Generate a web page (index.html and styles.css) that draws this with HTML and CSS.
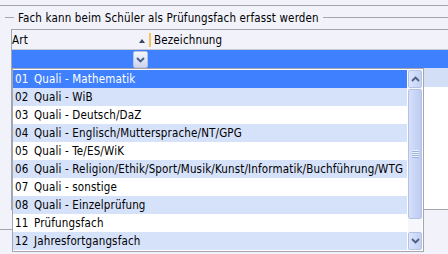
FILE: index.html
```html
<!DOCTYPE html>
<html lang="de">
<head>
<meta charset="utf-8">
<title>Prüfungsfach</title>
<link rel="stylesheet" href="styles.css">
</head>
<body>
<div class="top-rule"></div>
<div class="group-title">
  <span class="rule rule-short"></span>
  <span class="group-label">Fach kann beim Schüler als Prüfungsfach erfasst werden</span>
  <span class="rule rule-long"></span>
</div>
<div class="grid">
  <div class="grid-head">
    <div class="col-art">
      <span>Art</span>
      <span class="sort-up"></span>
    </div>
    <span class="col-sep"></span>
    <div class="col-bez">Bezeichnung</div>
  </div>
  <div class="grid-edit">
    <div class="edit-art">
      <span class="combo-btn">
        <svg width="9" height="6" viewBox="0 0 9 6"><path d="M1 1 L4.5 4.5 L8 1" fill="none" stroke="#4a5d85" stroke-width="1.8"/></svg>
      </span>
    </div>
  </div>
  <div class="grid-body">
    <div class="body-row alt"></div>
  </div>
</div>
<div class="footer-strip"><span class="footer-line"></span></div>

<div class="dropdown">
  <div class="dd-rows">
    <div class="dd-row sel"><span class="code">01</span><span>Quali - Mathematik</span></div>
    <div class="dd-row alt"><span class="code">02</span><span>Quali - WiB</span></div>
    <div class="dd-row"><span class="code">03</span><span>Quali - Deutsch/DaZ</span></div>
    <div class="dd-row alt"><span class="code">04</span><span>Quali - Englisch/Muttersprache/NT/GPG</span></div>
    <div class="dd-row"><span class="code">05</span><span>Quali - Te/ES/WiK</span></div>
    <div class="dd-row alt"><span class="code">06</span><span>Quali - Religion/Ethik/Sport/Musik/Kunst/Informatik/Buchführung/WTG</span></div>
    <div class="dd-row"><span class="code">07</span><span>Quali - sonstige</span></div>
    <div class="dd-row alt"><span class="code">08</span><span>Quali - Einzelprüfung</span></div>
    <div class="dd-row"><span class="code">11</span><span>Prüfungsfach</span></div>
    <div class="dd-row alt"><span class="code">12</span><span>Jahresfortgangsfach</span></div>
  </div>
  <div class="scrollbar">
    <div class="sb-btn">
      <svg width="9" height="6" viewBox="0 0 9 6"><path d="M1 5 L4.5 1.5 L8 5" fill="none" stroke="#4a5d85" stroke-width="1.8"/></svg>
    </div>
    <div class="sb-thumb">
      <span class="grip"></span>
    </div>
    <div class="sb-track"></div>
    <div class="sb-btn">
      <svg width="9" height="6" viewBox="0 0 9 6"><path d="M1 1 L4.5 4.5 L8 1" fill="none" stroke="#4a5d85" stroke-width="1.8"/></svg>
    </div>
  </div>
</div>
</body>
</html>
```

FILE: styles.css
```css
html, body {
  margin: 0;
  padding: 0;
}
body {
  width: 448px;
  height: 254px;
  overflow: hidden;
  position: relative;
  background: #f2f2fb;
  font-family: "DejaVu Sans Condensed", "DejaVu Sans", sans-serif;
  font-stretch: condensed;
  font-size: 11.5px;
  letter-spacing: 0.15px;
  color: #000;
}
.top-rule {
  height: 5px;
  border-bottom: 1px solid #a5a5ad;
}
.group-title {
  display: flex;
  align-items: center;
  height: 23px;
}
.rule {
  height: 0;
  border-top: 1px solid #a5a5ad;
}
.rule-short {
  width: 9px;
  margin-left: 5px;
  margin-right: 4px;
}
.rule-long {
  flex: 1;
  margin-left: 4px;
}
.group-label {
  white-space: nowrap;
}
.grid {
  margin-left: 11px;
  border-left: 1px solid #a5a5ad;
  border-top: 1px solid #a5a5ad;
  height: 179px;
  display: flex;
  flex-direction: column;
  border-bottom: 1px solid #a5a5ad;
}
.grid-head {
  display: flex;
  align-items: center;
  height: 19px;
  border-bottom: 1px solid #c8c8d4;
  background: #f2f2fb;
}
.col-art {
  width: 133px;
  display: flex;
  align-items: center;
  justify-content: space-between;
  padding-right: 4px;
}
.sort-up {
  width: 0;
  height: 0;
  border-left: 3.5px solid transparent;
  border-right: 3.5px solid transparent;
  border-bottom: 4px solid #3c4660;
  margin-top: 3px;
}
.col-sep {
  width: 2px;
  height: 14px;
  background: #f6c25e;
}
.col-bez {
  padding-left: 3px;
}
.grid-edit {
  height: 18px;
  background: #3f80ff;
  display: flex;
}
.edit-art {
  width: 136px;
  display: flex;
  justify-content: flex-end;
  align-items: flex-end;
}
.combo-btn {
  width: 13px;
  height: 15px;
  border: 1px solid #b9c3df;
  border-radius: 2px;
  background: linear-gradient(#f4f6fc, #cdd5ec);
  display: flex;
  align-items: center;
  justify-content: center;
}
.grid-body {
  flex: 1;
  background: #fff;
}
.body-row {
  height: 19px;
}
.body-row.alt {
  background: #d3dff7;
}
.footer-strip {
  height: 20px;
}
.footer-line {
  display: block;
  width: 12px;
  height: 19px;
  border-bottom: 1px solid #a5a5ad;
}
.dropdown {
  position: absolute;
  left: 12px;
  top: 68px;
  width: 409px;
  height: 180px;
  border: 1px solid #a5a5ad;
  background: #fff;
  display: flex;
  padding: 1px 1px 1px 0;
}
.dd-rows {
  width: 394px;
  display: flex;
  flex-direction: column;
}
.dd-row {
  height: 18px;
  display: flex;
  align-items: center;
  white-space: nowrap;
  color: #000;
}
.dd-row.alt {
  background: #d6e2fa;
}
.dd-row.sel {
  background: #3f80ff;
  color: #fff;
}
.code {
  width: 21px;
  padding-left: 2px;
  box-sizing: border-box;
}
.scrollbar {
  width: 14px;
  margin-left: 1px;
  display: flex;
  flex-direction: column;
  background: #f7f7fb;
}
.sb-btn {
  height: 16px;
  border: 1px solid #b4c2e6;
  border-radius: 2px;
  background: linear-gradient(90deg, #dbe4fb, #c2d0f3);
  display: flex;
  align-items: center;
  justify-content: center;
  flex: none;
}
.sb-thumb {
  margin-top: 1px;
  height: 128px;
  border: 1px solid #b4c2e6;
  border-radius: 2px;
  background: linear-gradient(90deg, #d6e0fa, #bccbf1);
  display: flex;
  align-items: center;
  justify-content: center;
  flex: none;
}
.grip {
  width: 7px;
  height: 8px;
  background: repeating-linear-gradient(#eef2fd 0 1px, #9eb0dc 1px 2px);
}
.sb-track {
  flex: 1;
}
```
